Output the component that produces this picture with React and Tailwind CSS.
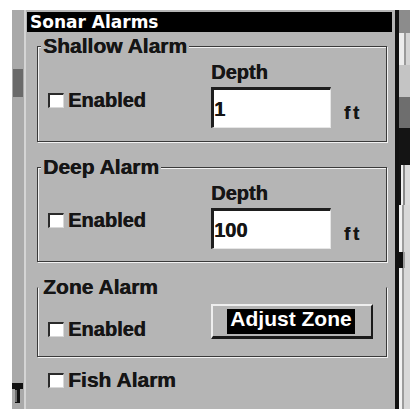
import React from "react";

function Check() {
  return (
    <span className="box-border w-[16px] h-[15px] bg-white border-t-2 border-l-2 border-r border-b border-t-[#2a2a2a] border-l-[#2a2a2a] border-r-[#d8d8d8] border-b-[#d8d8d8] mr-[4px] shrink-0" />
  );
}

function Enabled({ label = "Enabled", size = "text-[20px]" }) {
  return (
    <div className={`flex items-center leading-[20px] font-bold [text-shadow:0.5px_0_0_currentColor] ${size}`}>
      <Check />
      <span>{label}</span>
    </div>
  );
}

function Legend({ children }) {
  return (
    <div className="relative w-fit ml-[4px] px-[2px] -mb-[10px] bg-[#b5b5b5] text-[21px] leading-[20px] font-bold [text-shadow:0.5px_0_0_currentColor]">
      {children}
    </div>
  );
}

function DepthBlock({ value }) {
  return (
    <div className="flex flex-col pt-[15px]">
      <div className="text-[20px] leading-[20px] font-bold [text-shadow:0.5px_0_0_currentColor]">Depth</div>
      <div className="flex items-start mt-[5px]">
        <div className="box-border w-[120px] h-[41px] bg-white border-t-[3px] border-l-[3px] border-r border-b border-t-[#1e1e1e] border-l-[#1e1e1e] border-r-[#e6e6e6] border-b-[#e6e6e6] pt-[9px] text-[20px] leading-[20px] font-bold [text-shadow:0.5px_0_0_currentColor]">
          {value}
        </div>
        <div className="ml-[13px] mt-[16px] text-[18px] leading-[20px] font-bold tracking-[3px] [text-shadow:0.5px_0_0_currentColor]">ft</div>
      </div>
    </div>
  );
}

export default function App() {
  return (
    <div className="w-[415px] h-[409px] bg-white pt-[10px] pl-[12px] flex text-[#151515] font-['Liberation_Sans',Arial,sans-serif] overflow-hidden">
      {/* left strip */}
      <div className="w-[12px] h-full bg-[#a9a9a9] flex flex-col">
        <div className="h-[59px]" />
        <div className="ml-[1px] w-[10px] h-[28px] bg-[#6a6a6a]" />
        <div className="flex-1" />
        <svg width="12" height="21" viewBox="0 0 12 21" className="mb-[5px]">
          <polygon points="0,0 11,0 11,6 8,6 8,20 3,20 3,6 0,6" fill="#111" />
          <line x1="4" y1="7" x2="4" y2="19" stroke="#d0d0d0" strokeWidth="1" />
        </svg>
      </div>
      <div className="w-[2px] h-full bg-[#d4d4d4]" />

      {/* dialog */}
      <div className="w-[369px] h-full bg-[#b5b5b5] pt-[2px] flex flex-col">
        <div className="ml-[1px] mr-[3px] h-[20px] bg-black text-white pl-[3px] text-[17px] leading-[20px] font-bold font-['DejaVu_Sans',sans-serif]">
          Sonar Alarms
        </div>

        {/* Shallow */}
        <div className="ml-[11px] mr-[8px] mt-[4px]">
          <Legend>Shallow Alarm</Legend>
          <div className="flex border border-[#3a3a3a] shadow-[inset_1px_1px_0_#f2f2f2,1px_1px_0_#f2f2f2] pl-[10px] pb-[13px]">
            <div className="w-[163px] pt-[43px]">
              <Enabled />
            </div>
            <DepthBlock value="1" />
          </div>
        </div>

        {/* Deep */}
        <div className="ml-[11px] mr-[8px] mt-[15px]">
          <Legend>Deep Alarm</Legend>
          <div className="flex border border-[#3a3a3a] shadow-[inset_1px_1px_0_#f2f2f2,1px_1px_0_#f2f2f2] pl-[10px] pb-[12px]">
            <div className="w-[163px] pt-[42px]">
              <Enabled />
            </div>
            <DepthBlock value="100" />
          </div>
        </div>

        {/* Zone */}
        <div className="ml-[11px] mr-[8px] mt-[15px]">
          <Legend>Zone Alarm</Legend>
          <div className="flex border border-[#3a3a3a] border-t-transparent shadow-[inset_1px_0_0_#f2f2f2,1px_1px_0_#f2f2f2] pl-[10px] pb-[17px]">
            <div className="w-[163px] pt-[31px]">
              <Enabled />
            </div>
            <div className="mt-[16px] box-border w-[162px] h-[35px] border-t-2 border-l-2 border-r-2 border-b-[3px] border-t-[#eeeeee] border-l-[#eeeeee] border-r-[#1a1a1a] border-b-[#1a1a1a] flex items-center justify-center">
              <div className="h-[25px] px-[3px] bg-black text-white text-[21px] leading-[20px] font-bold -ml-[2px]">
                Adjust Zone
              </div>
            </div>
          </div>
        </div>

        {/* Fish */}
        <div className="ml-[22px] mt-[13px]">
          <Enabled label="Fish Alarm" size="text-[21px]" />
        </div>
      </div>

      {/* right black line */}
      <div className="w-[4px] h-full bg-[#111]" />

      {/* right strip */}
      <div className="w-[11px] h-full flex flex-col">
        <div className="h-[23px] bg-[#8c8c8c]" />
        <div className="h-[32px] flex">
          <div className="w-[5px] bg-[#ececec]" />
          <div className="w-[2px] bg-[#9a9a9a]" />
          <div className="flex-1 bg-[#d4d4d4]" />
        </div>
        <div className="h-[32px] bg-[#c4c4c4]" />
        <div className="h-[31px] bg-[#6e6e6e]" />
        <div className="h-[37px] bg-[#141414]" />
        <div className="h-[40px] flex">
          <div className="w-[2px] bg-[#141414]" />
          <div className="w-[2px] bg-[#f0f0f0]" />
          <div className="w-[2px] bg-[#8a8a8a]" />
          <div className="flex-1 bg-[#dcdcdc]" />
        </div>
        <div className="h-[47px] flex">
          <div className="w-[3px] bg-[#f2f2f2]" />
          <div className="w-[2px] bg-[#9c9c9c]" />
          <div className="flex-1 bg-[#d8d8d8]" />
        </div>
        <div className="h-[16px] flex">
          <div className="w-[4px] bg-[#111]" />
          <div className="w-[2px] bg-[#9c9c9c]" />
          <div className="flex-1 bg-[#d8d8d8]" />
        </div>
        <div className="flex-1 flex">
          <div className="w-[3px] bg-[#f2f2f2]" />
          <div className="w-[2px] bg-[#9c9c9c]" />
          <div className="flex-1 bg-[#d8d8d8]" />
        </div>
      </div>
    </div>
  );
}
